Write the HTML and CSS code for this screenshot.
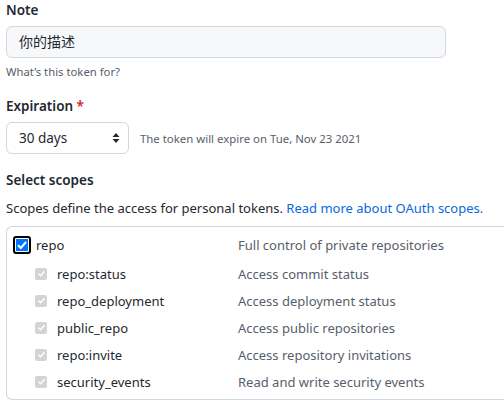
FILE: index.html
```html
<!DOCTYPE html>
<html>
<head>
<meta charset="utf-8">
<link rel="stylesheet" href="styles.css">
</head>
<body>
<div class="page">
  <div class="field">
    <label class="label">Note</label>
    <div class="input">你的描述</div>
    <p class="hint">What’s this token for?</p>
  </div>
  <div class="field field-exp">
    <label class="label">Expiration <span class="req">*</span></label>
    <div class="exp-row">
      <div class="select">
        <span>30 days</span>
        <svg class="arrows" width="8" height="12" viewBox="0 0 8 12"><path d="M4 1 L7.5 5 H0.5 Z M4 11 L7.5 7 H0.5 Z" fill="#24292f"/></svg>
      </div>
      <span class="exp-note">The token will expire on Tue, Nov 23 2021</span>
    </div>
  </div>
  <div class="field field-scopes">
    <div class="label">Select scopes</div>
    <p class="desc">Scopes define the access for personal tokens. <a href="#" class="link">Read more about OAuth scopes.</a></p>
    <div class="scope-box">
      <div class="row row-main">
        <span class="cb cb-main"><svg width="12" height="12" viewBox="0 0 12 12"><path d="M2 6.3 L4.8 9 L10 3" fill="none" stroke="#fff" stroke-width="2"/></svg></span>
        <span class="name name-main">repo</span>
        <span class="info">Full control of private repositories</span>
      </div>
      <div class="row">
        <span class="cb cb-sub"><svg width="9" height="9" viewBox="0 0 12 12"><path d="M2 6.3 L4.8 9 L10 3" fill="none" stroke="#fff" stroke-width="2"/></svg></span>
        <span class="name">repo:status</span>
        <span class="info">Access commit status</span>
      </div>
      <div class="row">
        <span class="cb cb-sub"><svg width="9" height="9" viewBox="0 0 12 12"><path d="M2 6.3 L4.8 9 L10 3" fill="none" stroke="#fff" stroke-width="2"/></svg></span>
        <span class="name">repo_deployment</span>
        <span class="info">Access deployment status</span>
      </div>
      <div class="row">
        <span class="cb cb-sub"><svg width="9" height="9" viewBox="0 0 12 12"><path d="M2 6.3 L4.8 9 L10 3" fill="none" stroke="#fff" stroke-width="2"/></svg></span>
        <span class="name">public_repo</span>
        <span class="info">Access public repositories</span>
      </div>
      <div class="row">
        <span class="cb cb-sub"><svg width="9" height="9" viewBox="0 0 12 12"><path d="M2 6.3 L4.8 9 L10 3" fill="none" stroke="#fff" stroke-width="2"/></svg></span>
        <span class="name">repo:invite</span>
        <span class="info">Access repository invitations</span>
      </div>
      <div class="row">
        <span class="cb cb-sub"><svg width="9" height="9" viewBox="0 0 12 12"><path d="M2 6.3 L4.8 9 L10 3" fill="none" stroke="#fff" stroke-width="2"/></svg></span>
        <span class="name">security_events</span>
        <span class="info">Read and write security events</span>
      </div>
    </div>
  </div>
</div>
</body>
</html>
```

FILE: styles.css
```css
* { box-sizing: border-box; }
html, body { margin: 0; padding: 0; background: #fff; }
body {
  font-family: "Noto Sans", "Noto Sans CJK SC", sans-serif;
  font-size: 13px;
  color: #24292f;
  overflow: hidden;
}
.page { padding: 0 0 0 6px; }
.field { display: flex; flex-direction: column; }
.label {
  font-weight: 600;
  font-size: 13.5px;
  line-height: 20px;
  height: 20px;
}
.input {
  margin-top: 6px;
  width: 440px;
  height: 32px;
  border: 1px solid #d0d7de;
  border-radius: 6px;
  background: #f6f8fa;
  padding: 0 12px;
  line-height: 30px;
  font-size: 14px;
}
.hint {
  margin: 5px 0 0;
  font-size: 11.3px;
  line-height: 18px;
  color: #57606a;
}
.field-exp { margin-top: 15px; }
.req { color: #cf222e; }
.exp-row { display: flex; align-items: center; margin-top: 6px; gap: 11px; }
.select {
  width: 123px;
  height: 32px;
  border: 1px solid #d0d7de;
  border-radius: 6px;
  background: #fff;
  display: flex;
  align-items: center;
  justify-content: space-between;
  padding: 0 8px 0 12px;
  font-size: 13.5px;
}
.arrows { display: block; }
.exp-note { font-size: 11.4px; color: #57606a; }
.field-scopes { margin-top: 16px; }
.desc { margin: 8px 0 0; line-height: 20px; }
.link { color: #0969da; text-decoration: none; }
.scope-box {
  margin-top: 8px;
  border: 1px solid #d0d7de;
  border-right: none;
  border-bottom-left-radius: 6px;
  border-top-left-radius: 6px;
  height: 174px;
  padding-top: 8px;
}
.row { display: flex; align-items: center; height: 27px; }
.row-main { height: 20px; margin-bottom: 5px; }
.cb { display: flex; align-items: center; justify-content: center; flex: none; }
.cb-main {
  width: 18px;
  height: 18px;
  margin-left: 6px;
  border: 2px solid #000;
  border-radius: 3px;
  background: #0075ff;
  box-shadow: inset 0 0 0 1px #fff;
}
.cb-sub {
  width: 12px;
  height: 12px;
  margin-left: 28px;
  background: #d4d4d4;
  border-radius: 2px;
}
.name { flex: none; }
.name-main { width: 202px; margin-left: 5px; }
.cb-sub + .name { width: 181px; margin-left: 10px; }
.info { color: #57606a; }
```
